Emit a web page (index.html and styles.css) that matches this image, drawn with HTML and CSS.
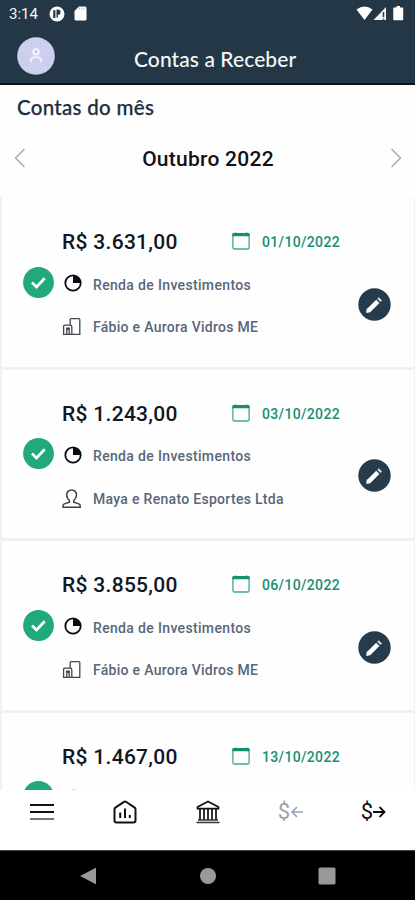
FILE: index.html
```html
<!DOCTYPE html>
<html lang="pt-BR">
<head>
<meta charset="utf-8">
<title>Contas a Receber</title>
<link rel="stylesheet" href="styles.css">
</head>
<body>
<svg class="defs" width="0" height="0">
  <symbol id="check" viewBox="0 0 31 31"><circle cx="15.5" cy="15.5" r="15.4" fill="#21a97a"/><path d="M9 15.500l4.500 4.500 8.200-8.700" fill="none" stroke="#fff" stroke-width="2.7"/></symbol>
  <symbol id="pie" viewBox="0 0 20 20"><circle cx="10" cy="10" r="7.7" fill="none" stroke="#080b12" stroke-width="1.8"/><path d="M10 2.5V10h7.6A7.6 7.6 0 0 0 10 2.5z" fill="#080b12"/></symbol>
  <symbol id="company" viewBox="0 0 20 20"><path d="M8.2 8V2.6q0-1 1-1h7.6q1 0 1 1v14.8H1.6V9.2q0-1 1-1h5.6q1.6 0 1.6 1.6v7.4M4.8 17v-4.6h2.4V17M4 11.2h4" fill="none" stroke="#42464c" stroke-width="1.3"/></symbol>
  <symbol id="person" viewBox="0 0 20 20"><path d="M9.600 1c-3 0-4.900 2-4.900 4.800 0 2.400 1 4.200 2.700 5.500v2L2.300 14.900q-1.300.5-1.300 1.800v1.600h17.200v-1.600q0-1.300-1.300-1.800l-5.100-1.600v-2c1.700-1.300 2.700-3.100 2.700-5.500 0-2.800-1.900-4.800-4.900-4.800z" fill="none" stroke="#3d4046" stroke-width="1.500"/></symbol>
  <symbol id="calendar" viewBox="0 0 18 18"><rect x=".9" y="1.600" width="16.200" height="15.400" rx="1.600" fill="none" stroke="#43a891" stroke-width="1.300"/><path d="M.4 4.200V2.400q0-1.300 1.400-1.300h1V.4h1.500v.7h9.400V.4h1.500v.7h1q1.400 0 1.400 1.300v1.800z" fill="#168e73"/></symbol>
  <symbol id="edit" viewBox="0 0 33 33"><circle cx="16.500" cy="16.500" r="16.200" fill="#263b4b"/><path d="M10.600 22.600l9.200-9.200" fill="none" stroke="#fff" stroke-width="4.600"/><path d="M8.600 24.500l.6-3.800 3.100 3.100z" fill="#fff" stroke="#fff" stroke-width=".8" stroke-linejoin="round"/><path d="M20.900 12.300l1.500-1.500" stroke="#d5dade" stroke-width="4.600" fill="none"/></symbol>
</svg>
<div class="phone">
  <header class="header">
    <div class="status">
      <span class="clock">3:14</span>
      <svg class="app" width="16" height="16" viewBox="0 0 16 16"><circle cx="8" cy="8" r="7.500" fill="#fff"/><path d="M5.300 4.200v7.800" stroke="#233746" stroke-width="2.200"/><path d="M7.500 3.600h1.400a2.600 2.600 0 0 1 0 5.200v2.800H7.500z" fill="#233746"/></svg>
      <svg class="sd" width="13" height="15" viewBox="0 0 13 15"><path d="M.5 5L5 .5h6q1.500 0 1.500 1.500v11q0 1.500-1.500 1.500H2q-1.500 0-1.500-1.500z" fill="#fff"/><path d="M5.500 1.500v2.200M7.700 1.500v2.200M9.900 1.500v2.200" stroke="#b9c1c8"/></svg>
      <svg class="signals" width="49" height="17" viewBox="0 0 49 17"><path d="M.5 4.500Q8.500-1.500 16.500 4.500L8.500 15z" fill="#fff"/><path d="M30 2v13H17.500z" fill="#f2f4f5"/><path d="M27.500 7v5M27.500 13.400v1.300" stroke="#233746" stroke-width="1.500"/><path d="M38 2.500h2.500V1h3.500v1.500h2.500q.7 0 .7.700v11.300q0 .7-.7.700H38q-.7 0-.7-.7V3.200q0-.7.700-.7z" fill="#fff"/></svg>
    </div>
    <div class="appbar">
      <svg class="avatar" width="38" height="38" viewBox="0 0 38 38"><circle cx="19" cy="19" r="18.800" fill="#ccd0ee"/><g fill="none" stroke="#f7f8ff" stroke-width="1.700" stroke-linecap="round"><circle cx="19" cy="14.800" r="2.800"/><path d="M13.500 24.700c.4-3 2.500-4.700 5.500-4.700s5.100 1.700 5.500 4.700"/></g></svg>
      <h1>Contas a Receber</h1>
    </div>
  </header>
  <h2>Contas do mês</h2>
  <div class="month">
    <svg width="12" height="20" viewBox="0 0 12 20"><path d="M10.500 1L1.500 10l9 9" fill="none" stroke="#aaa" stroke-width="1.500"/></svg>
    <strong>Outubro 2022</strong>
    <svg width="12" height="20" viewBox="0 0 12 20"><path d="M1.500 1l9 9-9 9" fill="none" stroke="#aaa" stroke-width="1.500"/></svg>
  </div>
  <main class="list">
    <article class="card">
      <svg class="check"><use href="#check"/></svg>
      <div class="body">
        <div class="row"><b class="amount">R$ 3.631,00</b><svg class="cal"><use href="#calendar"/></svg><time>01/10/2022</time></div>
        <div class="row"><svg class="ico raised"><use href="#pie"/></svg><span class="category">Renda de Investimentos</span></div>
        <div class="row"><svg class="ico"><use href="#company"/></svg><span class="company">Fábio e Aurora Vidros ME</span></div>
      </div>
      <svg class="edit"><use href="#edit"/></svg>
    </article>
    <article class="card">
      <svg class="check"><use href="#check"/></svg>
      <div class="body">
        <div class="row"><b class="amount">R$ 1.243,00</b><svg class="cal"><use href="#calendar"/></svg><time>03/10/2022</time></div>
        <div class="row"><svg class="ico raised"><use href="#pie"/></svg><span class="category">Renda de Investimentos</span></div>
        <div class="row"><svg class="ico"><use href="#person"/></svg><span class="person">Maya e Renato Esportes Ltda</span></div>
      </div>
      <svg class="edit"><use href="#edit"/></svg>
    </article>
    <article class="card">
      <svg class="check"><use href="#check"/></svg>
      <div class="body">
        <div class="row"><b class="amount">R$ 3.855,00</b><svg class="cal"><use href="#calendar"/></svg><time>06/10/2022</time></div>
        <div class="row"><svg class="ico raised"><use href="#pie"/></svg><span class="category">Renda de Investimentos</span></div>
        <div class="row"><svg class="ico"><use href="#company"/></svg><span class="company">Fábio e Aurora Vidros ME</span></div>
      </div>
      <svg class="edit"><use href="#edit"/></svg>
    </article>
    <article class="card">
      <svg class="check"><use href="#check"/></svg>
      <div class="body">
        <div class="row"><b class="amount">R$ 1.467,00</b><svg class="cal"><use href="#calendar"/></svg><time>13/10/2022</time></div>
        <div class="row"><svg class="ico raised faded"><use href="#pie"/></svg></div>
        <div class="row"></div>
      </div>
    </article>
  </main>
  <nav class="tabs">
    <svg width="26" height="24" viewBox="0 0 26 24"><path d="M1 5h24M1 12h24" stroke="#111" stroke-width="2"/><path d="M1 19h24" stroke="#777" stroke-width="2"/></svg>
    <svg width="26" height="24" viewBox="0 0 26 24"><path d="M2.500 9.200q0-1 .8-1.500L12 1.800q1-.7 2 0l8.700 5.900q.8.500.8 1.500v11.300q0 2-2 2h-17q-2 0-2-2z" fill="none" stroke="#111" stroke-width="2"/><path d="M8.200 12.500V18M13 8.500V18M17.800 15v3" stroke="#111" stroke-width="2"/></svg>
    <svg width="26" height="24" viewBox="0 0 26 24"><path d="M2.500 8.600v-1.700L13 1.500l10.500 5.400v1.700z" fill="none" stroke="#111" stroke-width="1.700"/><path d="M5 9v11M9 9v11M13 9v11M17 9v11M21 9v11" stroke="#111" stroke-width="1.700"/><path d="M3 20h20M1.500 22.500h23" stroke="#333" stroke-width="1.400"/></svg>
    <span class="money muted">$<svg width="13" height="12" viewBox="0 0 13 12"><path d="M13 6H2M7 1L2 6l5 5" fill="none" stroke="currentColor" stroke-width="1.600"/></svg></span>
    <span class="money">$<svg width="13" height="12" viewBox="0 0 13 12"><path d="M0 6h11.500M6.500 1l5 5-5 5" fill="none" stroke="currentColor" stroke-width="1.800"/></svg></span>
  </nav>
  <footer class="system">
    <svg width="18" height="18" viewBox="0 0 18 18"><path d="M17 .8v16.400L1 9z" fill="#999"/></svg>
    <svg width="18" height="18" viewBox="0 0 18 18"><circle cx="9" cy="9" r="8" fill="#999"/></svg>
    <svg width="18" height="18" viewBox="0 0 18 18"><rect x=".5" y=".5" width="17" height="17" rx="1.500" fill="#999"/></svg>
  </footer>
</div>
</body>
</html>
```
FILE: styles.css
```css
* { box-sizing: border-box; }
body { margin: 0; font-family: Roboto, sans-serif; background: #fefefe; }
svg { display: block; flex: none; }
.defs { position: absolute; }
.phone { width: 415px; height: 900px; display: flex; flex-direction: column; overflow: hidden; }
.header { height: 85px; flex: none; background: #233746; border-bottom: 2px solid #0b1218; color: #f6f7f8; }
.status { height: 28px; display: flex; align-items: center; padding: 0 10px 0 9px; }
.clock { width: 40px; font-size: 15px; }
.app { margin-top: -1px; }
.sd { margin-left: 9px; margin-top: -2px; }
.signals { margin-left: auto; margin-top: -2px; }
.appbar { height: 56px; display: flex; align-items: center; padding-left: 17px; }
h1, h2 { margin: 0; font-family: Lato, sans-serif; font-weight: 500; white-space: nowrap; }
h1 { font-size: 21px; line-height: 26px; margin-left: 79px; margin-top: 6px; letter-spacing: .08px; }
h2 { height: 46px; flex: none; padding: 9px 17px 0; font-size: 20.500px; line-height: 27px; letter-spacing: .3px; color: #1e2e3a; -webkit-text-stroke: .25px #1e2e3a; }
.month { height: 66px; flex: none; display: flex; justify-content: space-between; align-items: center; padding: 0 13px 12px 14px; }
.month strong { font-size: 21px; font-weight: 500; letter-spacing: .25px; color: #111; margin-top: 1px; }
.list { height: 593px; flex: none; overflow: hidden; }
.card { height: 171.500px; display: flex; align-items: center; border: 2px solid #f1f1f2; border-top-width: 1px; border-right-width: 1px; padding-left: 21px; }
.card:first-child { border-top-color: #f9f9f9; }
.check { width: 31px; height: 31px; }
.body { width: 290px; margin: 5px 0 0 8px; }
.row { height: 42.700px; display: flex; align-items: center; white-space: nowrap; color: #586779; font-size: 14px; font-weight: 500; letter-spacing: .34px; }
.amount { width: 170px; font-size: 21px; font-weight: 500; letter-spacing: .3px; color: #111722; }
.cal { width: 18px; height: 18px; margin-top: -2px; }
time { margin-left: 12px; color: #168e73; }
.company { letter-spacing: .29px; }
.person { letter-spacing: .3px; }
.ico { width: 20px; height: 20px; margin-right: 11px; }
.raised { margin-top: -3px; margin-left: 1px; margin-right: 10px; }
.faded { opacity: .35; }
.edit { width: 33px; height: 33px; margin: 44px 0 0 6px; }
.tabs { height: 60px; flex: none; display: grid; grid-template-columns: repeat(5, 1fr); justify-items: center; align-items: center; background: #fff; padding-bottom: 16px; }
.money { display: flex; align-items: center; font-size: 22px; line-height: 24px; color: #111; }
.muted { color: #99a3ad; }
.system { height: 50px; flex: none; background: #000; display: flex; justify-content: space-between; align-items: center; padding: 0 79px; border-top: 1px solid #444; }
```
